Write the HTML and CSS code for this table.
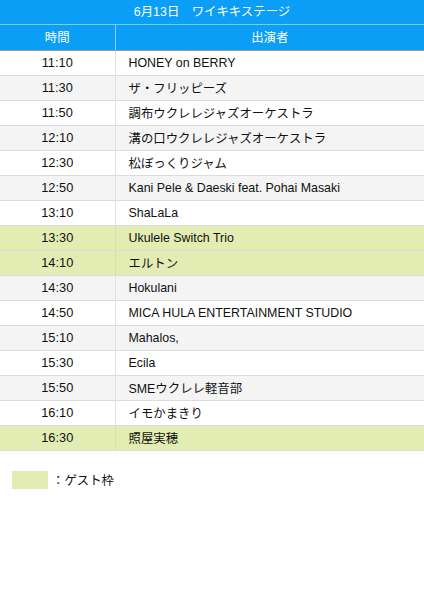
FILE: index.html
```html
<!DOCTYPE html>
<html lang="ja">
<head>
<meta charset="utf-8">
<link rel="stylesheet" href="styles.css">
</head>
<body>
<div class="title">6月13日　ワイキキステージ</div>
<table class="sched">
  <thead>
    <tr><th class="time">時間</th><th class="name">出演者</th></tr>
  </thead>
  <tbody>
    <tr><td class="time">11:10</td><td class="name">HONEY on BERRY</td></tr>
    <tr class="alt"><td class="time">11:30</td><td class="name">ザ・フリッピーズ</td></tr>
    <tr><td class="time">11:50</td><td class="name">調布ウクレレジャズオーケストラ</td></tr>
    <tr class="alt"><td class="time">12:10</td><td class="name">溝の口ウクレレジャズオーケストラ</td></tr>
    <tr><td class="time">12:30</td><td class="name">松ぼっくりジャム</td></tr>
    <tr class="alt"><td class="time">12:50</td><td class="name">Kani Pele &amp; Daeski feat. Pohai Masaki</td></tr>
    <tr><td class="time">13:10</td><td class="name">ShaLaLa</td></tr>
    <tr class="guest"><td class="time">13:30</td><td class="name">Ukulele Switch Trio</td></tr>
    <tr class="guest"><td class="time">14:10</td><td class="name">エルトン</td></tr>
    <tr class="alt"><td class="time">14:30</td><td class="name">Hokulani</td></tr>
    <tr><td class="time">14:50</td><td class="name">MICA HULA ENTERTAINMENT STUDIO</td></tr>
    <tr class="alt"><td class="time">15:10</td><td class="name">Mahalos,</td></tr>
    <tr><td class="time">15:30</td><td class="name">Ecila</td></tr>
    <tr class="alt"><td class="time">15:50</td><td class="name">SMEウクレレ軽音部</td></tr>
    <tr><td class="time">16:10</td><td class="name">イモかまきり</td></tr>
    <tr class="guest"><td class="time">16:30</td><td class="name">照屋実穂</td></tr>
  </tbody>
</table>
<div class="legend">
  <span class="swatch"></span><span class="legend-text">：ゲスト枠</span>
</div>
</body>
</html>
```
FILE: styles.css
```css
* { box-sizing: border-box; }
html, body { margin: 0; padding: 0; background: #fff; }
body {
  font-family: "Liberation Sans", "Noto Sans CJK JP", sans-serif;
  font-size: 12.4px;
  color: #111;
  width: 424px;
}
.title {
  height: 25px;
  line-height: 24px;
  background: #0a9ef7;
  color: #fff;
  text-align: center;
  font-size: 12.4px;
  border-bottom: 1px solid #7fcaf7;
}
.sched {
  width: 100%;
  border-collapse: collapse;
  table-layout: fixed;
}
.sched th, .sched td {
  padding: 0;
  height: 25px;
  font-weight: normal;
  border-bottom: 1px solid #dcdcdc;
}
.sched th {
  background: #0a9ef7;
  color: #fff;
  height: 25px;
  border-bottom: 1px solid #9a9a9a;
}
.sched th.time { border-right: 1px solid #8fd0f7; }
.sched .time {
  width: 115px;
  text-align: center;
}
.sched td.time {
  border-right: 1px solid #e2e2e2;
  font-size: 12.8px;
}
.sched td.name { padding-left: 13px; }
.sched th.name { text-align: center; }
.sched tr.alt td { background: #f4f4f4; }
.sched tr.guest td { background: #e3edb3; }
.sched tr.guest td.time { border-right-color: #d8e0aa; }
.legend {
  display: flex;
  align-items: center;
  padding: 20px 0 0 12px;
}
.swatch {
  width: 36px;
  height: 18px;
  background: #e3edb3;
}
.legend-text { margin-left: 4px; }
```
